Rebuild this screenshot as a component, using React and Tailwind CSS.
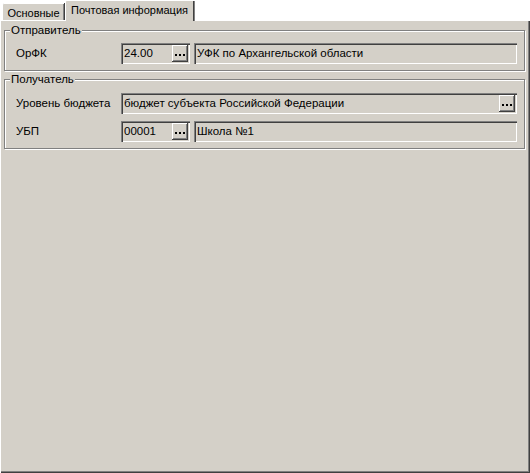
import React from "react";

// Classic Win9x-style bevels
const sunken =
  "shadow-[inset_1px_1px_0_#808080,inset_2px_2px_0_#404040,inset_-1px_-1px_0_#ffffff,inset_-2px_-2px_0_#d4d0c8]";
const raised =
  "shadow-[inset_-1px_-1px_0_#404040,inset_1px_1px_0_#ffffff,inset_-2px_-2px_0_#808080]";

function EllipsisButton() {
  return (
    <div className={`w-[16px] h-full bg-[#d4d0c8] ${raised} flex items-center justify-center pt-[2px] shrink-0`}>
      <div className="flex gap-[2px]">
        <span className="block w-[2px] h-[2px] bg-black" />
        <span className="block w-[2px] h-[2px] bg-black" />
        <span className="block w-[2px] h-[2px] bg-black" />
      </div>
    </div>
  );
}

function Field({ value, button, className = "" }) {
  return (
    <div className={`h-[21px] bg-[#d4d0c8] ${sunken} flex items-stretch p-[2px] ${className}`}>
      <div className="flex-1 flex items-center pl-[1px] whitespace-nowrap overflow-hidden">{value}</div>
      {button && <EllipsisButton />}
    </div>
  );
}

function GroupBox({ title, className = "", children }) {
  return (
    <div
      className={`relative border border-[#808080] shadow-[inset_1px_1px_0_#ffffff,1px_1px_0_#ffffff] pl-[11px] pr-[7px] ${className}`}
    >
      <span className="absolute -top-[8px] left-[5px] bg-[#d4d0c8] px-[1px] leading-[14px]">{title}</span>
      {children}
    </div>
  );
}

function Row({ label, children }) {
  return (
    <div className="flex items-center">
      <div className="w-[105px] shrink-0">{label}</div>
      <div className="flex-1 flex gap-[4px]">{children}</div>
    </div>
  );
}

export default function App() {
  return (
    <div className="w-[530px] h-[473px] bg-white flex flex-col text-[11.5px] leading-[13px] text-black font-['Liberation_Sans',Arial,sans-serif]">
      {/* tab strip */}
      <div className="h-[20px] flex items-end pl-[2px] relative z-10 text-[11px]">
        <div className="h-[17px] w-[62px] bg-[#d4d0c8] border-t border-l border-white rounded-tl-[2px] shadow-[inset_-1px_0_0_#808080,1px_0_0_#404040] flex justify-center pt-[3px]">
          Основные
        </div>
        <div className="h-[21px] -mb-px ml-[1px] w-[130px] bg-[#d4d0c8] border-t border-l border-white rounded-tl-[2px] shadow-[inset_-1px_0_0_#808080,inset_-2px_0_0_#404040] flex justify-center pt-[3px] pr-[2px]">
          Почтовая информация
        </div>
      </div>

      {/* page body */}
      <div className="flex-1 bg-[#d4d0c8] shadow-[inset_1px_1px_0_#ffffff,inset_-1px_-1px_0_#404040,inset_-2px_-2px_0_#808080] pl-[4px] pr-[5px] pt-[10px]">
        <GroupBox title="Отправитель" className="pt-[12px] pb-[6px]">
          <Row label="ОрФК">
            <Field value="24.00" button className="w-[69px]" />
            <Field value="УФК по Архангельской области" className="flex-1" />
          </Row>
        </GroupBox>

        <GroupBox title="Получатель" className="mt-[8px] pt-[13px] pb-[6px] flex flex-col gap-[7px]">
          <Row label="Уровень бюджета">
            <Field value="бюджет субъекта Российской Федерации" button className="flex-1" />
          </Row>
          <Row label="УБП">
            <Field value="00001" button className="w-[69px]" />
            <Field value="Школа №1" className="flex-1" />
          </Row>
        </GroupBox>
      </div>
    </div>
  );
}
